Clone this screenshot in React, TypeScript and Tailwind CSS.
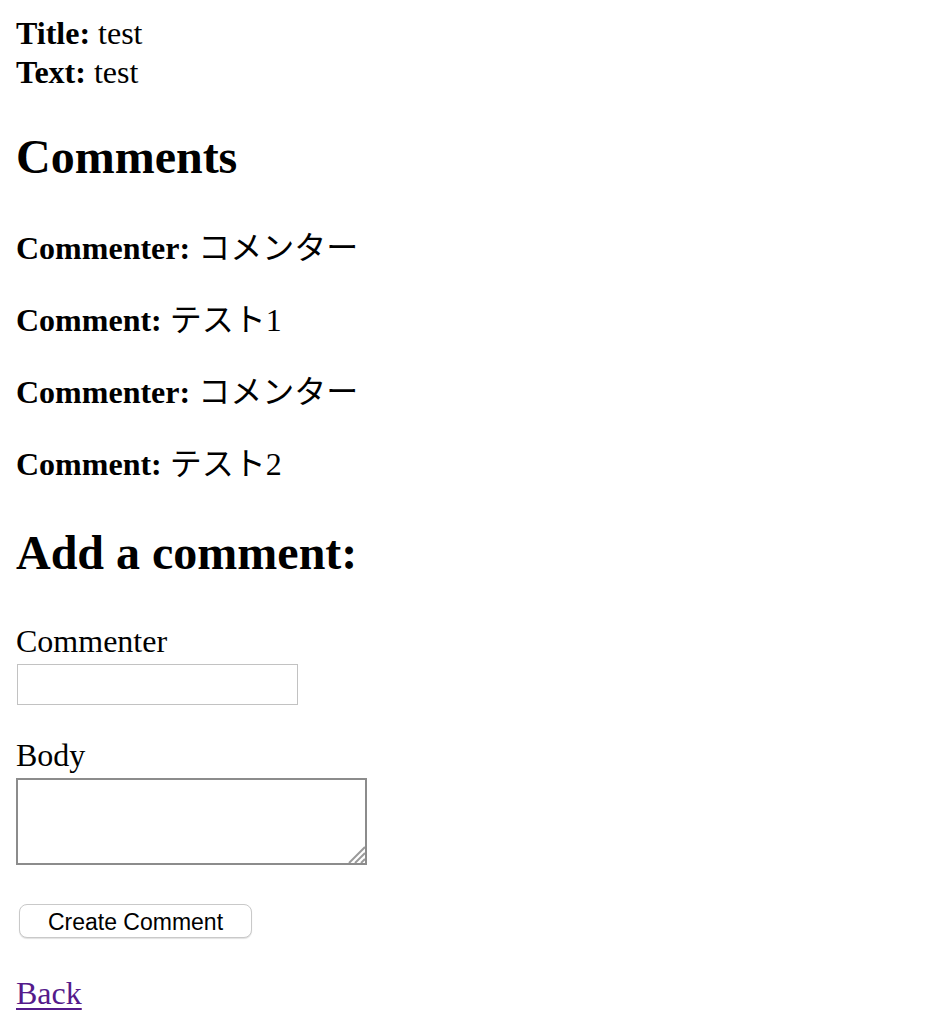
import React from 'react';

const comments = [
    { commenter: 'コメンター', body: 'テスト1' },
    { commenter: 'コメンター', body: 'テスト2' },
];

const ResizeGrip = () => (
    <svg className="absolute right-[2px] bottom-[2px]" width="18" height="18" viewBox="0 0 18 18">
        <path d="M18 2 L2 18" stroke="#9a9a9a" strokeWidth="2" />
        <path d="M18 8 L8 18" stroke="#9a9a9a" strokeWidth="2" />
        <path d="M18 14 L14 18" stroke="#9a9a9a" strokeWidth="2" />
    </svg>
);

const App = () => {
    return (
        <div className="min-h-screen bg-white text-black px-4 pt-[14px] font-['Liberation_Serif','Noto_Sans_CJK_JP',serif] text-[32px] leading-[39px]">
            <div>
                <div>
                    <strong>Title:</strong> test
                </div>
                <div>
                    <strong>Text:</strong> test
                </div>
            </div>

            <h2 className="mt-[37px] text-[48px] leading-[55px] font-bold">Comments</h2>

            <div className="mt-[45px] flex flex-col gap-[33px]">
                {comments.map((c, i) => (
                    <React.Fragment key={i}>
                        <p>
                            <strong>Commenter:</strong> {c.commenter}
                        </p>
                        <p>
                            <strong>Comment:</strong> {c.body}
                        </p>
                    </React.Fragment>
                ))}
            </div>

            <h2 className="mt-[41px] text-[48px] leading-[55px] font-bold">Add a comment:</h2>

            <form onSubmit={(e) => e.preventDefault()}>
                <div className="mt-[42px]">
                    <label htmlFor="commenter">Commenter</label>
                    <input
                        id="commenter"
                        type="text"
                        className="block mt-[3px] ml-[1px] w-[281px] h-[41px] border border-[#c2c2c2] bg-white outline-none"
                    />
                </div>
                <div className="mt-[31px]">
                    <label htmlFor="body">Body</label>
                    <div className="relative mt-[3px] w-[351px] h-[87px]">
                        <textarea id="body" className="block w-full h-full border-2 border-[#8c8c8c] bg-white resize-none outline-none" />
                        <ResizeGrip />
                    </div>
                </div>
                <div className="mt-[39px]">
                    <button
                        type="submit"
                        className="ml-[3px] w-[233px] h-[34px] pt-[3px] flex items-center justify-center rounded-[8px] border border-[#c9c9c9] bg-white shadow-[0_1px_1px_rgba(0,0,0,0.12)] font-['Liberation_Sans',Arial,sans-serif] text-[23px] leading-none"
                    >
                        Create Comment
                    </button>
                </div>
            </form>

            <a href="#" className="inline-block mt-[36px] text-[#551a8b] underline decoration-[2px] underline-offset-[4px]">
                Back
            </a>
        </div>
    );
};

export default App;
